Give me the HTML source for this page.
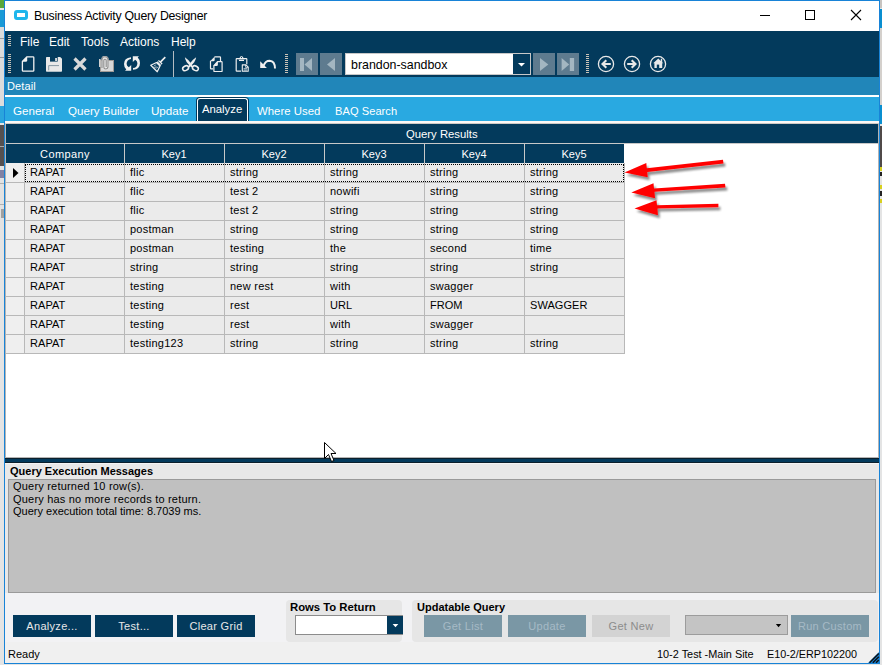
<!DOCTYPE html>
<html><head><meta charset="utf-8">
<style>
*{margin:0;padding:0;box-sizing:border-box}
html,body{width:882px;height:665px;overflow:hidden;background:#e6e6e6;font-family:"Liberation Sans",sans-serif;font-variant-ligatures:none}
.a{position:absolute}
.t{position:absolute;white-space:nowrap;line-height:1}
</style></head><body>
<div class="a" style="left:0;top:0;width:882px;height:665px;background:#e4e4e4"></div>
<!-- left strip background -->
<div class="a" style="left:0;top:0;width:4px;height:8px;background:#5aa83a"></div>
<div class="a" style="left:0;top:8px;width:4px;height:2px;background:#e8e8e8"></div>
<div class="a" style="left:0;top:10px;width:4px;height:17px;background:#1a9ad6"></div>
<div class="a" style="left:0;top:27px;width:4px;height:79px;background:#dcdcdc"></div>
<div class="a" style="left:0;top:38px;width:4px;height:1px;background:#9a9a9a"></div>
<div class="a" style="left:0;top:57px;width:4px;height:1px;background:#9a9a9a"></div>
<div class="a" style="left:0;top:106px;width:4px;height:17px;background:#2aa5dc"></div>
<div class="a" style="left:0;top:125px;width:4px;height:41px;background:#555050"></div>
<div class="a" style="left:0;top:146px;width:4px;height:1px;background:#aaa"></div>
<div class="a" style="left:0;top:166px;width:4px;height:64px;background:#e2e2e2"></div>
<div class="a" style="left:0;top:170px;width:4px;height:8px;background:#5a5a8a;opacity:.7"></div>
<div class="a" style="left:0;top:183px;width:4px;height:1px;background:#b0b0b0"></div>
<div class="a" style="left:0;top:204px;width:4px;height:1px;background:#b0b0b0"></div>
<div class="a" style="left:1px;top:209px;width:3px;height:9px;background:#777;opacity:.6"></div>
<!-- right strip -->
<div class="a" style="left:880px;top:0;width:2px;height:8px;background:#c8c4c0"></div>
<div class="a" style="left:880px;top:9px;width:2px;height:19px;background:#0a8fd0"></div>
<div class="a" style="left:880px;top:28px;width:2px;height:77px;background:#d4d0cc"></div>
<div class="a" style="left:880px;top:105px;width:2px;height:19px;background:#0a8fd0"></div>
<div class="a" style="left:880px;top:126px;width:2px;height:41px;background:#504a48"></div>
<div class="a" style="left:880px;top:167px;width:2px;height:4px;background:#d8d020"></div>
<div class="a" style="left:880px;top:172px;width:2px;height:4px;background:#222"></div>
<div class="a" style="left:880px;top:185px;width:2px;height:4px;background:#d8d020"></div>
<div class="a" style="left:880px;top:191px;width:2px;height:5px;background:#222"></div>
<div class="a" style="left:880px;top:199px;width:2px;height:4px;background:#d8d020"></div>
<!-- window -->
<div class="a" style="left:4px;top:0;width:876px;height:664px;border:1px solid #1883d7;background:#f0f0f0"></div>
<!-- title bar -->
<div class="a" style="left:5px;top:1px;width:874px;height:30px;background:#fff"></div>
<div class="a" style="left:14px;top:10px;width:14px;height:10px;border:3px solid #1fb6ec;border-radius:3px"></div>
<div class="t" style="left:34px;top:10px;font-size:12.3px;letter-spacing:-0.25px;color:#000">Business Activity Query Designer</div>
<!-- caption buttons -->
<div class="a" style="left:760px;top:15px;width:10px;height:1px;background:#000"></div>
<div class="a" style="left:805px;top:10px;width:10px;height:10px;border:1px solid #000"></div>
<svg class="a" style="left:850px;top:9px" width="12" height="12"><path d="M1 1L11 11M11 1L1 11" stroke="#000" stroke-width="1.1"/></svg>

<!-- menu + toolbar navy -->
<div class="a" style="left:5px;top:31px;width:874px;height:46px;background:#033a5c"></div>
<div class="t" style="left:20px;top:36px;font-size:12px;color:#fff">File</div>
<div class="t" style="left:49px;top:36px;font-size:12px;color:#fff">Edit</div>
<div class="t" style="left:81px;top:36px;font-size:12px;color:#fff">Tools</div>
<div class="t" style="left:120px;top:36px;font-size:12px;color:#fff">Actions</div>
<div class="t" style="left:171px;top:36px;font-size:12px;color:#fff">Help</div>


<!-- toolbar icons -->
<svg class="a" style="left:0;top:0" width="882" height="80">
 <g fill="#c9c3b8">
  <rect x="8" y="35" width="3" height="1"/><rect x="8" y="37" width="3" height="1"/><rect x="8" y="39" width="3" height="1"/><rect x="8" y="41" width="3" height="1"/><rect x="8" y="43" width="3" height="1"/><rect x="8" y="45" width="3" height="1"/>
  <rect x="8" y="54" width="3" height="1"/><rect x="8" y="56" width="3" height="1"/><rect x="8" y="58" width="3" height="1"/><rect x="8" y="60" width="3" height="1"/><rect x="8" y="62" width="3" height="1"/><rect x="8" y="64" width="3" height="1"/><rect x="8" y="66" width="3" height="1"/><rect x="8" y="68" width="3" height="1"/><rect x="8" y="70" width="3" height="1"/><rect x="8" y="72" width="3" height="1"/>
  <rect x="285" y="54" width="3" height="1"/><rect x="285" y="56" width="3" height="1"/><rect x="285" y="58" width="3" height="1"/><rect x="285" y="60" width="3" height="1"/><rect x="285" y="62" width="3" height="1"/><rect x="285" y="64" width="3" height="1"/><rect x="285" y="66" width="3" height="1"/><rect x="285" y="68" width="3" height="1"/><rect x="285" y="70" width="3" height="1"/><rect x="285" y="72" width="3" height="1"/>
  <rect x="586" y="54" width="3" height="1"/><rect x="586" y="56" width="3" height="1"/><rect x="586" y="58" width="3" height="1"/><rect x="586" y="60" width="3" height="1"/><rect x="586" y="62" width="3" height="1"/><rect x="586" y="64" width="3" height="1"/><rect x="586" y="66" width="3" height="1"/><rect x="586" y="68" width="3" height="1"/><rect x="586" y="70" width="3" height="1"/><rect x="586" y="72" width="3" height="1"/>
 </g>
 <!-- new doc -->
 <path d="M27 56.8H33Q33.8 56.8 33.8 57.6V70.4Q33.8 71.2 33 71.2H23.2Q22.4 71.2 22.4 70.4V61.4Z" fill="none" stroke="#f2f2f2" stroke-width="1.3" stroke-linejoin="round"/><path d="M22 61.8L27.2 56.4V60.2Q27.2 61.8 25.8 61.8Z" fill="#f2f2f2"/>
 <!-- save -->
 <path d="M46 57.8Q46 57 46.8 57H60.2L62 58.8V70.9Q62 71.7 61.2 71.7H46.8Q46 71.7 46 70.9Z" fill="#e8e8e8"/>
 <rect x="50" y="57" width="7.7" height="4.6" fill="#033a5c"/>
 <rect x="55.2" y="58" width="1.7" height="3" fill="#e8e8e8"/>
 <path d="M48.7 70.3V65.6H59" fill="none" stroke="#7d909c" stroke-width="0.9"/>
 <!-- X -->
 <path d="M74.5 58.5L85.5 69.5M85.5 58.5L74.5 69.5" stroke="#d9d9d9" stroke-width="3.2"/>
 <!-- attach -->
 <rect x="100.5" y="60.5" width="13" height="11" fill="#d8d8d8" stroke="#a09a96" stroke-width="1"/>
 <rect x="99" y="59" width="1.6" height="8" fill="#d0d0d0"/>
 <path d="M101.5 59Q101.5 56 104.5 56Q108.5 56 108.5 59V67Q108.5 70 105.5 70Q102 70 102 67Z" fill="#e6e6e6"/>
 <path d="M102 68V59.5Q102 56.8 104.8 56.8Q108 56.8 108 59.5V66.5Q108 69 105.5 69Q103.8 69 103.8 67V60.5Q103.8 59.3 105 59.3Q106.2 59.3 106.2 60.5V67" fill="none" stroke="#8e8e8e" stroke-width="1.1"/>
 <!-- refresh -->
 <path d="M131 57.2Q124 57.8 124 64Q124 67.5 126.3 69.5L125 70.8H131.2V65L128.8 67.3Q126.6 66 126.6 63.8Q126.8 59.3 131 58.9Z" fill="#f0f0f0"/>
 <path d="M133 69.8Q140 69.2 140 63Q140 59.5 137.7 57.5L139 56.2H132.8V62L135.2 59.7Q137.4 61 137.4 63.2Q137.2 67.7 133 68.1Z" fill="#f0f0f0"/>
 <!-- broom -->
 <g transform="translate(154 68.5) rotate(45)">
  <rect x="-0.8" y="-16" width="1.6" height="7" fill="#f0f0f0"/>
  <rect x="-2.6" y="-9.5" width="5.2" height="3.2" fill="#f0f0f0"/>
  <rect x="-2.6" y="-8.2" width="5.2" height="0.7" fill="#033a5c"/>
  <path d="M-2.5 -6H2.5L4.6 0H-4.6Z" fill="none" stroke="#f0f0f0" stroke-width="1.2" stroke-linejoin="round"/>
  <path d="M-1.5 -4V-1.5M1.5 -4V-1.5M0 -3V-0.5" stroke="#f0f0f0" stroke-width="0.9"/>
 </g>
 <!-- separator -->
 <rect x="173" y="51" width="1" height="26" fill="#b4bcc2"/>
 <!-- scissors -->
 <path d="M184.9 57.3Q185.2 61.5 190.2 66L192 64.6Q188.8 59.8 184.9 57.3Z" fill="#eeeeee"/>
 <path d="M196.1 57.3Q195.8 61.5 190.8 66L189 64.6Q192.2 59.8 196.1 57.3Z" fill="#eeeeee"/>
 <path d="M190.5 65.2L188 67.2M190.5 65.2L193 67.2" stroke="#eeeeee" stroke-width="1.8"/>
 <ellipse cx="185.6" cy="68.2" rx="3.1" ry="2.2" transform="rotate(-28 185.6 68.2)" fill="none" stroke="#eeeeee" stroke-width="1.5"/>
 <ellipse cx="195.4" cy="68.2" rx="3.1" ry="2.2" transform="rotate(28 195.4 68.2)" fill="none" stroke="#eeeeee" stroke-width="1.5"/>
 <!-- copy -->
 <path d="M214.5 56.8H219.8Q220.5 56.8 220.5 57.5V61.5M213 68.8H211.1Q210.5 68.8 210.5 68.2V60.8" fill="none" stroke="#eeeeee" stroke-width="1.2"/>
 <path d="M210.1 61.3L214.7 56.4V59.9Q214.7 61.3 213.3 61.3Z" fill="#eeeeee"/>
 <path d="M217.5 61.6H221.5Q222.1 61.6 222.1 62.2V70.9Q222.1 71.5 221.5 71.5H214.5Q213.9 71.5 213.9 70.9V65.6Z" fill="#033a5c" stroke="#eeeeee" stroke-width="1.2" stroke-linejoin="round"/>
 <path d="M213.4 66.1L217.9 61.1V64.7Q217.9 66.1 216.5 66.1Z" fill="#eeeeee"/>
 <!-- paste -->
 <path d="M241 71.2H236.8Q236.2 71.2 236.2 70.6V59.2Q236.2 58.6 236.8 58.6H246.2Q246.8 58.6 246.8 59.2V64.2" fill="none" stroke="#eeeeee" stroke-width="1.2"/>
 <path d="M238.3 59.2L239.8 57.6Q240.3 56 241.5 56Q242.7 56 243.2 57.6L244.7 59.2Z" fill="#eeeeee"/>
 <circle cx="241.5" cy="57.4" r="0.6" fill="#033a5c"/>
 <rect x="239" y="59.8" width="5" height="1.2" fill="#eeeeee"/>
 <path d="M242.3 64.9H245.9L248.2 67.2V71.3H242.3Z" fill="#033a5c" stroke="#eeeeee" stroke-width="1.1" stroke-linejoin="round"/>
 <path d="M245.6 65V67.4H248.1M243.6 68.7H247M243.6 70.1H247" fill="none" stroke="#eeeeee" stroke-width="0.8"/>
 <!-- undo -->
 <path d="M263.6 65.8Q265.3 60.8 269.6 60.8Q274.9 61 275 68.6" fill="none" stroke="#f0f0f0" stroke-width="2"/>
 <path d="M260.2 61.2V68H266.9Z" fill="#f0f0f0"/>
 <!-- nav buttons -->
 <rect x="296" y="53" width="22" height="22" fill="#5e7b8f"/>
 <rect x="320" y="53" width="22" height="22" fill="#5e7b8f"/>
 <rect x="533" y="53" width="22" height="22" fill="#5e7b8f"/>
 <rect x="557" y="53" width="22" height="22" fill="#5e7b8f"/>
 <g fill="#a3b6c1">
  <rect x="300" y="58" width="4" height="13"/><path d="M312 58V71L304.5 64.5Z"/>
  <path d="M335 58V71L327 64.5Z"/>
  <path d="M540 58V71L548.3 64.5Z"/>
  <path d="M561.6 58V71L569.2 64.5Z"/><rect x="569.8" y="58" width="4.3" height="13"/>
 </g>
 <!-- combo -->
 <rect x="345.5" y="53.5" width="185" height="21" fill="#fff" stroke="#c8c8c8" stroke-width="1"/>
 <rect x="513" y="54" width="17" height="20" fill="#033a5c"/>
 <path d="M518 63H525L521.5 66.5Z" fill="#fff"/>
 <!-- back/forward/home -->
 <circle cx="606" cy="64" r="7.6" fill="none" stroke="#e8e8e8" stroke-width="1.3"/>
 <circle cx="632" cy="64" r="7.6" fill="none" stroke="#e8e8e8" stroke-width="1.3"/>
 <circle cx="658" cy="64" r="7.6" fill="none" stroke="#e8e8e8" stroke-width="1.3"/>
 <path d="M610.8 64H602.8M606.3 60.3L602.5 64L606.3 67.7" fill="none" stroke="#e8e8e8" stroke-width="2.1"/>
 <path d="M627.2 64H635.2M631.7 60.3L635.5 64L631.7 67.7" fill="none" stroke="#e8e8e8" stroke-width="2.1"/>
 <path d="M653.2 63.3L658.3 58.6L660.8 60.9V58.8H662.2V62.2L663.4 63.3H662.2V68H654.4V63.3Z" fill="#e8e8e8"/>
 <rect x="656.8" y="64.6" width="2.4" height="3.4" fill="#033a5c"/>
</svg>
<div class="t" style="left:351px;top:59px;font-size:12.4px;color:#000">brandon-sandbox</div>

<!-- detail bar -->
<div class="a" style="left:5px;top:77px;width:874px;height:18px;background:#2186b9"></div>
<div class="t" style="left:7px;top:81px;font-size:11px;letter-spacing:0.1px;color:#fff">Detail</div>
<div class="a" style="left:5px;top:95px;width:874px;height:2px;background:#fff"></div>
<!-- tabs bar -->
<div class="a" style="left:5px;top:97px;width:874px;height:24px;background:#29a9e1"></div>

<div class="t" style="left:13px;top:105px;font-size:11.6px;color:#fff">General</div>
<div class="t" style="left:68px;top:105px;font-size:11.6px;color:#fff">Query Builder</div>
<div class="t" style="left:151px;top:105px;font-size:11.6px;color:#fff">Update</div>
<div class="a" style="left:196px;top:97px;width:53px;height:25px;background:#033a5c;border-radius:4px 4px 0 0"></div>
<div class="a" style="left:197px;top:98px;width:51px;height:24px;border:1px solid #fff;border-bottom:0;border-radius:3px 3px 0 0"></div>
<div class="t" style="left:202px;top:104px;font-size:11.3px;color:#fff">Analyze</div>
<div class="t" style="left:257px;top:106px;font-size:11.4px;color:#fff">Where Used</div>
<div class="t" style="left:335px;top:106px;font-size:11.1px;letter-spacing:0.05px;color:#fff">BAQ Search</div>
<div class="a" style="left:5px;top:121px;width:874px;height:2px;background:#fbf8f6"></div>
<div class="a" style="left:5px;top:123px;width:874px;height:1px;background:#cfcac6"></div>

<!-- grid area -->
<div class="a" style="left:5px;top:124px;width:874px;height:334px;background:#fff;border:1px solid #b4b4b4;border-top:0"></div>

<div class="a" style="left:6px;top:124px;width:872px;height:19px;background:#033a5c"></div>
<div class="t" style="left:406px;top:129px;font-size:11.3px;color:#fff">Query Results</div>
<div class="a" style="left:6px;top:143px;width:872px;height:1px;background:#c8c8c8"></div>
<div class="a" style="left:6px;top:144px;width:618px;height:19px;background:#033a5c"></div>
<div class="t" style="left:6px;top:149px;width:118px;text-align:center;font-size:11px;letter-spacing:0.4px;color:#fff">Company</div>
<div class="t" style="left:124px;top:149px;width:100px;text-align:center;font-size:11px;color:#fff">Key1</div>
<div class="a" style="left:124px;top:144px;width:1px;height:19px;background:#c8c8c8"></div>
<div class="t" style="left:224px;top:149px;width:100px;text-align:center;font-size:11px;color:#fff">Key2</div>
<div class="a" style="left:224px;top:144px;width:1px;height:19px;background:#c8c8c8"></div>
<div class="t" style="left:324px;top:149px;width:100px;text-align:center;font-size:11px;color:#fff">Key3</div>
<div class="a" style="left:324px;top:144px;width:1px;height:19px;background:#c8c8c8"></div>
<div class="t" style="left:424px;top:149px;width:100px;text-align:center;font-size:11px;color:#fff">Key4</div>
<div class="a" style="left:424px;top:144px;width:1px;height:19px;background:#c8c8c8"></div>
<div class="t" style="left:524px;top:149px;width:100px;text-align:center;font-size:11px;color:#fff">Key5</div>
<div class="a" style="left:524px;top:144px;width:1px;height:19px;background:#c8c8c8"></div>
<div class="a" style="left:6px;top:163px;width:619px;height:191px;background:#ebebeb"></div>
<div class="a" style="left:6px;top:163px;width:18px;height:191px;background:#efefef"></div>
<div class="a" style="left:6px;top:182px;width:619px;height:1px;background:#b8b8b8"></div>
<div class="t" style="left:30px;top:167px;font-size:11px;letter-spacing:0.05px;color:#000">RAPAT</div>
<div class="t" style="left:130px;top:167px;font-size:11px;letter-spacing:0.25px;color:#000">flic</div>
<div class="t" style="left:230px;top:167px;font-size:11px;letter-spacing:0.25px;color:#000">string</div>
<div class="t" style="left:330px;top:167px;font-size:11px;letter-spacing:0.25px;color:#000">string</div>
<div class="t" style="left:430px;top:167px;font-size:11px;letter-spacing:0.25px;color:#000">string</div>
<div class="t" style="left:530px;top:167px;font-size:11px;letter-spacing:0.25px;color:#000">string</div>
<div class="a" style="left:6px;top:201px;width:619px;height:1px;background:#b8b8b8"></div>
<div class="t" style="left:30px;top:186px;font-size:11px;letter-spacing:0.05px;color:#000">RAPAT</div>
<div class="t" style="left:130px;top:186px;font-size:11px;letter-spacing:0.25px;color:#000">flic</div>
<div class="t" style="left:230px;top:186px;font-size:11px;letter-spacing:0.25px;color:#000">test 2</div>
<div class="t" style="left:330px;top:186px;font-size:11px;letter-spacing:0.25px;color:#000">nowifi</div>
<div class="t" style="left:430px;top:186px;font-size:11px;letter-spacing:0.25px;color:#000">string</div>
<div class="t" style="left:530px;top:186px;font-size:11px;letter-spacing:0.25px;color:#000">string</div>
<div class="a" style="left:6px;top:220px;width:619px;height:1px;background:#b8b8b8"></div>
<div class="t" style="left:30px;top:205px;font-size:11px;letter-spacing:0.05px;color:#000">RAPAT</div>
<div class="t" style="left:130px;top:205px;font-size:11px;letter-spacing:0.25px;color:#000">flic</div>
<div class="t" style="left:230px;top:205px;font-size:11px;letter-spacing:0.25px;color:#000">test 2</div>
<div class="t" style="left:330px;top:205px;font-size:11px;letter-spacing:0.25px;color:#000">string</div>
<div class="t" style="left:430px;top:205px;font-size:11px;letter-spacing:0.25px;color:#000">string</div>
<div class="t" style="left:530px;top:205px;font-size:11px;letter-spacing:0.25px;color:#000">string</div>
<div class="a" style="left:6px;top:239px;width:619px;height:1px;background:#b8b8b8"></div>
<div class="t" style="left:30px;top:224px;font-size:11px;letter-spacing:0.05px;color:#000">RAPAT</div>
<div class="t" style="left:130px;top:224px;font-size:11px;letter-spacing:0.25px;color:#000">postman</div>
<div class="t" style="left:230px;top:224px;font-size:11px;letter-spacing:0.25px;color:#000">string</div>
<div class="t" style="left:330px;top:224px;font-size:11px;letter-spacing:0.25px;color:#000">string</div>
<div class="t" style="left:430px;top:224px;font-size:11px;letter-spacing:0.25px;color:#000">string</div>
<div class="t" style="left:530px;top:224px;font-size:11px;letter-spacing:0.25px;color:#000">string</div>
<div class="a" style="left:6px;top:258px;width:619px;height:1px;background:#b8b8b8"></div>
<div class="t" style="left:30px;top:243px;font-size:11px;letter-spacing:0.05px;color:#000">RAPAT</div>
<div class="t" style="left:130px;top:243px;font-size:11px;letter-spacing:0.25px;color:#000">postman</div>
<div class="t" style="left:230px;top:243px;font-size:11px;letter-spacing:0.25px;color:#000">testing</div>
<div class="t" style="left:330px;top:243px;font-size:11px;letter-spacing:0.25px;color:#000">the</div>
<div class="t" style="left:430px;top:243px;font-size:11px;letter-spacing:0.25px;color:#000">second</div>
<div class="t" style="left:530px;top:243px;font-size:11px;letter-spacing:0.25px;color:#000">time</div>
<div class="a" style="left:6px;top:277px;width:619px;height:1px;background:#b8b8b8"></div>
<div class="t" style="left:30px;top:262px;font-size:11px;letter-spacing:0.05px;color:#000">RAPAT</div>
<div class="t" style="left:130px;top:262px;font-size:11px;letter-spacing:0.25px;color:#000">string</div>
<div class="t" style="left:230px;top:262px;font-size:11px;letter-spacing:0.25px;color:#000">string</div>
<div class="t" style="left:330px;top:262px;font-size:11px;letter-spacing:0.25px;color:#000">string</div>
<div class="t" style="left:430px;top:262px;font-size:11px;letter-spacing:0.25px;color:#000">string</div>
<div class="t" style="left:530px;top:262px;font-size:11px;letter-spacing:0.25px;color:#000">string</div>
<div class="a" style="left:6px;top:296px;width:619px;height:1px;background:#b8b8b8"></div>
<div class="t" style="left:30px;top:281px;font-size:11px;letter-spacing:0.05px;color:#000">RAPAT</div>
<div class="t" style="left:130px;top:281px;font-size:11px;letter-spacing:0.25px;color:#000">testing</div>
<div class="t" style="left:230px;top:281px;font-size:11px;letter-spacing:0.25px;color:#000">new rest</div>
<div class="t" style="left:330px;top:281px;font-size:11px;letter-spacing:0.25px;color:#000">with</div>
<div class="t" style="left:430px;top:281px;font-size:11px;letter-spacing:0.25px;color:#000">swagger</div>
<div class="a" style="left:6px;top:315px;width:619px;height:1px;background:#b8b8b8"></div>
<div class="t" style="left:30px;top:300px;font-size:11px;letter-spacing:0.05px;color:#000">RAPAT</div>
<div class="t" style="left:130px;top:300px;font-size:11px;letter-spacing:0.25px;color:#000">testing</div>
<div class="t" style="left:230px;top:300px;font-size:11px;letter-spacing:0.25px;color:#000">rest</div>
<div class="t" style="left:330px;top:300px;font-size:11px;letter-spacing:0.05px;color:#000">URL</div>
<div class="t" style="left:430px;top:300px;font-size:11px;letter-spacing:0.05px;color:#000">FROM</div>
<div class="t" style="left:530px;top:300px;font-size:11px;letter-spacing:0.05px;color:#000">SWAGGER</div>
<div class="a" style="left:6px;top:334px;width:619px;height:1px;background:#b8b8b8"></div>
<div class="t" style="left:30px;top:319px;font-size:11px;letter-spacing:0.05px;color:#000">RAPAT</div>
<div class="t" style="left:130px;top:319px;font-size:11px;letter-spacing:0.25px;color:#000">testing</div>
<div class="t" style="left:230px;top:319px;font-size:11px;letter-spacing:0.25px;color:#000">rest</div>
<div class="t" style="left:330px;top:319px;font-size:11px;letter-spacing:0.25px;color:#000">with</div>
<div class="t" style="left:430px;top:319px;font-size:11px;letter-spacing:0.25px;color:#000">swagger</div>
<div class="a" style="left:6px;top:353px;width:619px;height:1px;background:#b8b8b8"></div>
<div class="t" style="left:30px;top:338px;font-size:11px;letter-spacing:0.05px;color:#000">RAPAT</div>
<div class="t" style="left:130px;top:338px;font-size:11px;letter-spacing:0.25px;color:#000">testing123</div>
<div class="t" style="left:230px;top:338px;font-size:11px;letter-spacing:0.25px;color:#000">string</div>
<div class="t" style="left:330px;top:338px;font-size:11px;letter-spacing:0.25px;color:#000">string</div>
<div class="t" style="left:430px;top:338px;font-size:11px;letter-spacing:0.25px;color:#000">string</div>
<div class="t" style="left:530px;top:338px;font-size:11px;letter-spacing:0.25px;color:#000">string</div>
<div class="a" style="left:24px;top:163px;width:1px;height:191px;background:#b8b8b8"></div>
<div class="a" style="left:124px;top:163px;width:1px;height:191px;background:#b8b8b8"></div>
<div class="a" style="left:224px;top:163px;width:1px;height:191px;background:#b8b8b8"></div>
<div class="a" style="left:324px;top:163px;width:1px;height:191px;background:#b8b8b8"></div>
<div class="a" style="left:424px;top:163px;width:1px;height:191px;background:#b8b8b8"></div>
<div class="a" style="left:524px;top:163px;width:1px;height:191px;background:#b8b8b8"></div>
<div class="a" style="left:624px;top:163px;width:1px;height:191px;background:#b8b8b8"></div>
<svg class="a" style="left:12px;top:167px" width="8" height="12"><path d="M1 1V11L6.5 6Z" fill="#000"/></svg>
<div class="a" style="left:25px;top:164px;width:599px;height:18px;border:1px dotted #000"></div>
<!-- splitter -->
<div class="a" style="left:5px;top:458px;width:874px;height:5px;background:#033a5c;border-top:1px solid #0b1f2c;border-bottom:1px solid #0b1f2c"></div>
<!-- messages -->
<div class="a" style="left:5px;top:463px;width:874px;height:130px;background:#e8e8e8"></div>
<div class="a" style="left:8px;top:479px;width:868px;height:114px;background:#c0c0c0;border:1px solid #9a9a9a"></div>


<div class="a" style="left:5px;top:463px;width:874px;height:1px;background:#f4f4f4"></div>
<div class="t" style="left:10px;top:466px;font-size:11px;font-weight:bold;color:#000">Query Execution Messages</div>
<div class="t" style="left:13px;top:480px;font-size:11px;color:#000;line-height:12.5px;letter-spacing:0.2px">Query returned 10 row(s).<br>Query has no more records to return.<br><span style="letter-spacing:0px">Query execution total time: 8.7039 ms.</span></div>

<!-- bottom panel -->
<div class="a" style="left:5px;top:593px;width:874px;height:49px;background:#f2f2f4"></div>

<div class="a" style="left:13px;top:615px;width:78px;height:22px;background:#033a5c"></div>
<div class="t" style="left:13px;top:621px;width:78px;text-align:center;font-size:11px;letter-spacing:0.3px;color:#e8e8e8">Analyze...</div>
<div class="a" style="left:95px;top:615px;width:78px;height:22px;background:#033a5c"></div>
<div class="t" style="left:95px;top:621px;width:78px;text-align:center;font-size:11px;letter-spacing:0.3px;color:#e8e8e8">Test...</div>
<div class="a" style="left:177px;top:615px;width:78px;height:22px;background:#033a5c"></div>
<div class="t" style="left:177px;top:621px;width:78px;text-align:center;font-size:11px;letter-spacing:0.3px;color:#e8e8e8">Clear Grid</div>
<div class="a" style="left:286px;top:600px;width:116px;height:42px;background:#e6e6e6;border-radius:4px"></div>
<div class="t" style="left:290px;top:602px;font-size:11.3px;font-weight:bold;color:#000">Rows To Return</div>
<div class="a" style="left:295px;top:615px;width:108px;height:20px;background:#fff;border:1px solid #8c8c8c"></div>
<div class="a" style="left:387px;top:616px;width:16px;height:18px;background:#033a5c"></div>
<svg class="a" style="left:387px;top:615px" width="16" height="20"><path d="M5.6 9.1H11.3L8.45 12.3Z" fill="#fff"/></svg>
<div class="a" style="left:412px;top:600px;width:466px;height:42px;background:#e6e6e6;border-radius:4px"></div>
<div class="t" style="left:417px;top:602px;font-size:11px;font-weight:bold;color:#000">Updatable Query</div>
<div class="a" style="left:424px;top:615px;width:78px;height:22px;background:#7a97a5"></div>
<div class="t" style="left:424px;top:621px;width:78px;text-align:center;font-size:11px;letter-spacing:0.3px;color:#a6bac5">Get List</div>
<div class="a" style="left:508px;top:615px;width:78px;height:22px;background:#7a97a5"></div>
<div class="t" style="left:508px;top:621px;width:78px;text-align:center;font-size:11px;letter-spacing:0.3px;color:#a6bac5">Update</div>
<div class="a" style="left:592px;top:615px;width:78px;height:22px;background:#d3d3d3"></div>
<div class="t" style="left:592px;top:621px;width:78px;text-align:center;font-size:11px;letter-spacing:0.3px;color:#8c8c8c">Get New</div>
<div class="a" style="left:685px;top:615px;width:103px;height:20px;background:#c4c4c4;border:1px solid #9c9c9c"></div>
<svg class="a" style="left:770px;top:615px" width="16" height="20"><path d="M5.9 9.1H11.2L8.55 12.3Z" fill="#000"/></svg>
<div class="a" style="left:791px;top:615px;width:78px;height:22px;background:#7a97a5"></div>
<div class="t" style="left:791px;top:621px;width:78px;text-align:center;font-size:11px;letter-spacing:0.3px;color:#a6bac5">Run Custom</div>

<!-- status bar -->
<div class="a" style="left:5px;top:642px;width:874px;height:21px;background:#f0f0f0"></div>

<div class="t" style="left:8px;top:649px;font-size:11px;color:#000">Ready</div>
<div class="t" style="left:657px;top:649px;font-size:10.9px;color:#000">10-2 Test -Main Site</div>
<div class="t" style="left:767px;top:649px;font-size:10.8px;color:#000">E10-2/ERP102200</div>
<svg class="a" style="left:866px;top:650px" width="14" height="14"><path d="M1.5 13.5L13.5 1.5V13.5Z" fill="#1883d7"/><path d="M3.5 12.8L12.8 3.5M6.8 12.8L12.8 6.8M10 12.8L12.8 10" stroke="#111" stroke-width="1.5"/></svg>
<!-- arrows -->
<svg class="a" style="left:0;top:0" width="882" height="665">
 <defs><filter id="sh" x="-20%" y="-50%" width="140%" height="200%"><feGaussianBlur in="SourceAlpha" stdDeviation="1.2"/><feOffset dx="2" dy="3"/><feComponentTransfer><feFuncA type="linear" slope="0.45"/></feComponentTransfer><feMerge><feMergeNode/><feMergeNode in="SourceGraphic"/></feMerge></filter></defs>
 <g fill="#ff0000" filter="url(#sh)">
  <path d="M624.5 172.4L646.3 162.9L646.8 168.2L723 159.8L723.5 163.6L647.3 172L647.7 177.2Z"/>
  <path d="M631.3 192.4L653.5 183.3L654 188.5L725 183.8L725.5 187.5L654.5 191.8L655 198.3Z"/>
  <path d="M634.5 208.5L656.5 200.3L657 205.2L718.4 203.8L718.4 207.3L657.5 208.5L657.9 215.3Z"/>
 </g>
 <!-- cursor -->
 <path d="M324.5 442.5V458.5L328.5 454.5L331.5 461.5L334 460.5L331 453.5H336Z" fill="#fff" stroke="#000" stroke-width="1" stroke-linejoin="miter"/>
</svg>

</body></html>
